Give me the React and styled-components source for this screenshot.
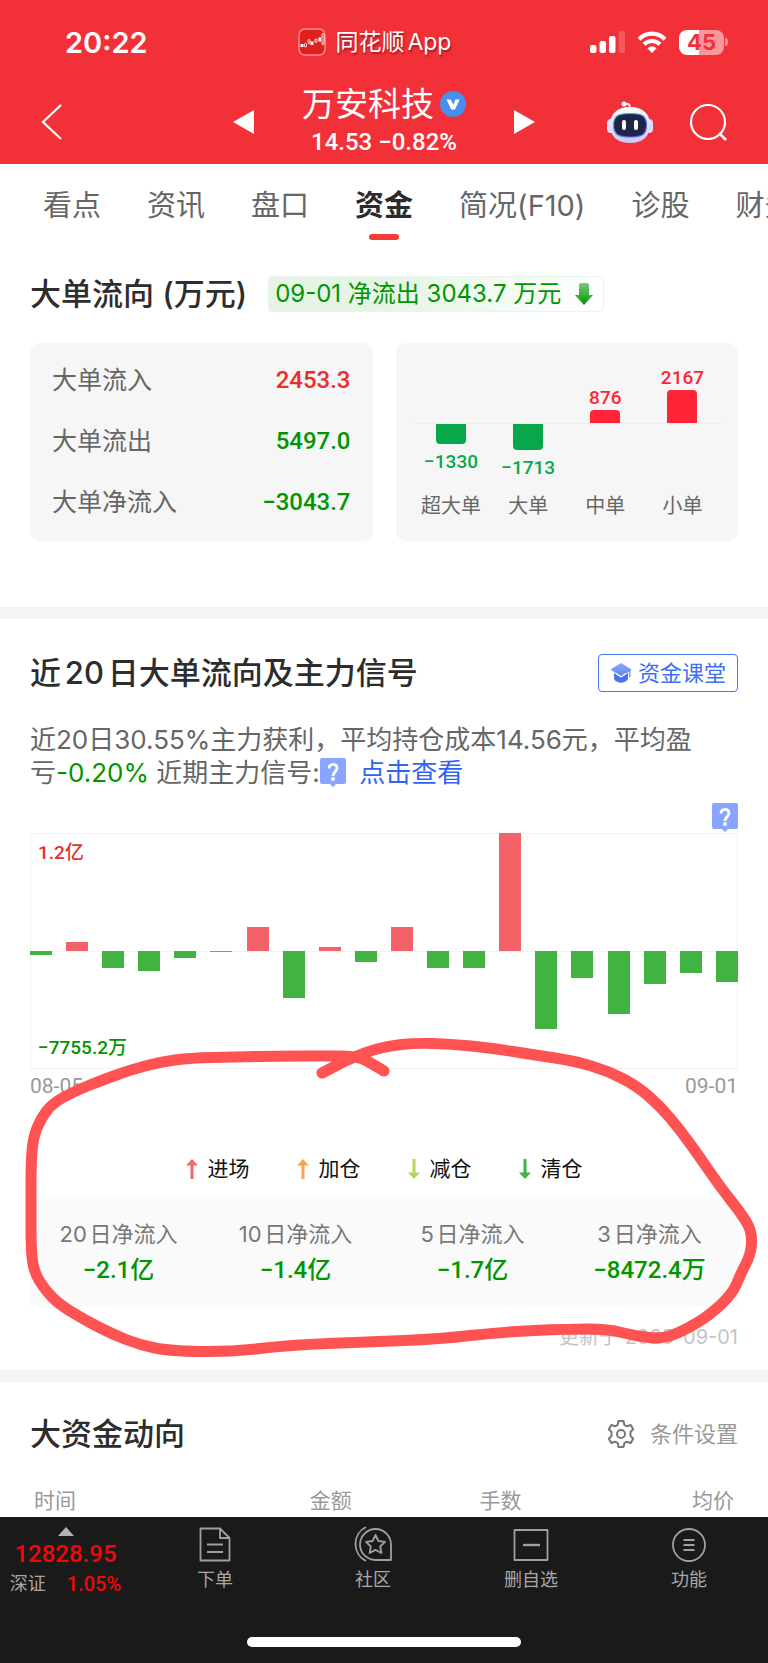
import React from 'react'
import styled, { createGlobalStyle } from 'styled-components'

const tabs = ['看点', '资讯', '盘口', '资金', '简况(F10)', '诊股', '财务']

const orderRows = [
  { label: '大单流入', value: '2453.3', up: true },
  { label: '大单流出', value: '5497.0' },
  { label: '大单净流入', value: '−3043.7' },
]

const orderBars = [
  { label: '超大单', value: -1330 },
  { label: '大单', value: -1713 },
  { label: '中单', value: 876 },
  { label: '小单', value: 2167 },
]

// net inflow of each day, as a percentage of half the chart height
const dailyFlow = [
  -3, 8, -14, -17, -6, 0.4, 20, -40, 3, -9, 20, -14, -14, 100, -66, -23, -53,
  -28, -19, -26,
]

const signals = [
  { label: '进场', color: '#f0696c', up: true },
  { label: '加仓', color: '#ffa24d', up: true },
  { label: '减仓', color: '#b5d655' },
  { label: '清仓', color: '#43b244' },
]

const netInflow = [
  { label: '20日净流入', value: '−2.1亿' },
  { label: '10日净流入', value: '−1.4亿' },
  { label: '5日净流入', value: '−1.7亿' },
  { label: '3日净流入', value: '−8472.4万' },
]

const markPoints = [
  [384, 41], [371, 33], [357, 26], [320, 26], [280, 26], [235, 27], [190, 28],
  [160, 32], [130, 40], [100, 51], [75, 61], [53, 73], [41, 88], [33, 108],
  [31, 135], [31, 175], [31, 220], [34, 242], [45, 260], [60, 275], [85, 290],
  [112, 304], [140, 315], [170, 321], [230, 322], [290, 315], [368, 312],
  [440, 309], [501, 302], [568, 299], [608, 299], [635, 306], [663, 309],
  [685, 300], [710, 285], [733, 263], [741, 243], [751, 224], [752, 203],
  [744, 187], [721, 158], [701, 129], [681, 101], [660, 76], [637, 56],
  [608, 41], [575, 31], [535, 25], [491, 18], [451, 14], [415, 13], [388, 16],
  [366, 22], [345, 31], [322, 43],
]

// Runs a quadratic curve through the middles of the given points
const smoothPath = points => {
  let d = `M${points[0].join(' ')}`
  for (let i = 1; i < points.length - 1; i++) {
    const [x, y] = points[i]
    const [nx, ny] = points[i + 1]
    d += ` Q${x} ${y} ${(x + nx) / 2} ${(y + ny) / 2}`
  }
  return `${d} L${points[points.length - 1].join(' ')}`
}

const AppLogo = () => (
  <svg width='28' height='28' viewBox='0 0 28 28' fill='none'>
    <rect x='1' y='1' width='26' height='26' rx='6' fill='#e0201f' stroke='#ff8f92' strokeWidth='1.4' />
    <path d='M2.500 16h3v3h-3zM12.500 13.500h3v3.500h-3zM20.500 9.500h2.500v4h-2.500z' fill='#fff' />
    <g stroke='#fff' strokeWidth='0.9'>
      <rect x='6.500' y='15.500' width='2' height='3.500' rx='1' />
      <rect x='10' y='11.500' width='2' height='4' rx='1' />
      <rect x='17' y='11' width='2' height='3.500' rx='1' />
      <rect x='24' y='5.500' width='2' height='11' rx='1' />
    </g>
  </svg>
)

const SignalIcon = () => (
  <svg width='35' height='22' viewBox='0 0 35 22' fill='#fff'>
    <rect x='0' y='14' width='6.500' height='8' rx='2' />
    <rect x='9.500' y='10' width='6.500' height='12' rx='2' />
    <rect x='19' y='5' width='6.500' height='17' rx='2' />
    <rect x='28.500' y='0' width='6.500' height='22' rx='2' opacity='0.2' />
  </svg>
)

const WifiIcon = () => (
  <svg width='30' height='22' viewBox='0 0 30 22' fill='none' stroke='#fff' strokeWidth='4.200'>
    <path d='M2 8.200C9.300 .8 20.700 .8 28 8.200' />
    <path d='M7 13.300c4.500-4.400 11.500-4.400 16 0' />
    <path d='M15 22l-4.600-4.700c2.600-2.300 6.600-2.300 9.200 0z' fill='#fff' stroke='none' />
  </svg>
)

const VerifiedIcon = () => (
  <svg width='26' height='26' viewBox='0 0 26 26'>
    <circle cx='13' cy='13' r='13' fill='#468fee' />
    <path d='M6.500 8.500h4.300l2.700 5.500 1.800-5.500h4.400L15 18.500h-3.800z' fill='#fff' />
  </svg>
)

const RobotIcon = () => (
  <svg width='46' height='42' viewBox='0 0 46 42'>
    <defs>
      <linearGradient id='shell' x1='0' y1='0' x2='0' y2='1'>
        <stop offset='0' stopColor='#ffffff' />
        <stop offset='1' stopColor='#c9c6f5' />
      </linearGradient>
      <linearGradient id='rim' x1='0' y1='0' x2='1' y2='1'>
        <stop offset='0' stopColor='#50c8d8' />
        <stop offset='1' stopColor='#6b46e8' />
      </linearGradient>
    </defs>
    <path d='M17 3c4-1 6 0 6 4' fill='none' stroke='#f1efff' strokeWidth='2' />
    <circle cx='17' cy='3' r='2.500' fill='#fff' />
    <rect x='0' y='18' width='8' height='14' rx='4' fill='#d9dcfa' />
    <rect x='38' y='18' width='8' height='14' rx='4' fill='#d9dcfa' />
    <path d='M23 6c13 0 20 7 20 18s-7 18-20 18S3 35 3 24 10 6 23 6z' fill='url(#shell)' />
    <path d='M23 12.500c11 0 16.500 1.500 16.500 11.500S34 36 23 36 6.500 34 6.500 24 12 12.500 23 12.500z' fill='#1d2646' stroke='url(#rim)' strokeWidth='1.200' />
    <rect x='15' y='19' width='4' height='10' rx='2' fill='#fff' />
    <rect x='27' y='19' width='4' height='10' rx='2' fill='#fff' />
  </svg>
)

const HelpIcon = () => (
  <svg width='26' height='29' viewBox='0 0 26 29'>
    <path d='M2 0h22a2 2 0 0 1 2 2v22a2 2 0 0 1-2 2h-8l-3 3-3-3H2a2 2 0 0 1-2-2V2a2 2 0 0 1 2-2z' fill='#8aa5ff' />
    <path d='M9 10.500C9 5 17 5 17 10c0 3.500-4 4-4 8' fill='none' stroke='#fff' strokeWidth='2.800' />
    <circle cx='13' cy='21' r='2' fill='#fff' />
  </svg>
)

const ClassIcon = () => (
  <svg width='22' height='20' viewBox='0 0 22 20'>
    <defs>
      <linearGradient id='cap' x1='0' y1='0' x2='0' y2='1'>
        <stop offset='0' stopColor='#8daaf8' />
        <stop offset='1' stopColor='#5c85f5' />
      </linearGradient>
    </defs>
    <path d='M4 10l7 4.200 7-4.200v6c-3 5-11 5-14 0z' fill='#4876f2' />
    <path d='M11 0l10.500 6.500-1 1.500v6h-1.300V8.700L11 13.500.5 6.500z' fill='url(#cap)' />
    <path d='M6 10.500l5 3.300 5-3.300' fill='none' stroke='#fff' strokeWidth='1.200' />
  </svg>
)

const GearIcon = () => (
  <svg width='28' height='28' viewBox='0 0 28 28' fill='none' stroke='#777' strokeWidth='2' strokeLinejoin='round'>
    <path d='M11.500 1h5l.8 3.800 2.600 1.500 3.800-1.300 2.500 4.300L23.500 12v4l2.700 2.700-2.500 4.300-3.800-1.300-2.600 1.500-.8 3.800h-5l-.8-3.800-2.600-1.500L4.300 23l-2.500-4.300L4.500 16v-4L1.800 9.300 4.300 5l3.800 1.300 2.600-1.500z' />
    <circle cx='14' cy='14' r='4' />
  </svg>
)

const SignalArrow = ({ color, up }) => (
  <svg width='12' height='20' viewBox='0 0 12 20'>
    {up ? (
      <path d='M6 0l6 6.500H7.500V20h-3V6.500H0z' fill={color} />
    ) : (
      <path d='M6 20l6-6.500H7.500V0h-3v13.500H0z' fill={color} />
    )}
  </svg>
)

const OrderIcon = () => (
  <svg width='34' height='36' viewBox='0 0 34 36'>
    <path d='M2.500 2.500H22L31.500 12v22.500h-29zM22 2.500V12h9.500M9 18.500h16M9 26h16' />
  </svg>
)

const CommunityIcon = () => (
  <svg width='38' height='36' viewBox='0 0 38 36'>
    <path d='M37 34V18.500a15.500 15.500 0 1 0-15.500 15.500zM12 1a19 19 0 0 0 0 34' />
    <path d='M21.500 9l2.900 6 6.600.9-4.800 4.600 1.200 6.500-5.900-3.100-5.900 3.100 1.200-6.500-4.800-4.600 6.600-.9z' />
  </svg>
)

const RemoveIcon = () => (
  <svg width='36' height='36' viewBox='0 0 36 36'>
    <path d='M1.500 4h33v30h-33z' />
    <path d='M10 19h17' strokeWidth='2.400' />
  </svg>
)

const MenuIcon = () => (
  <svg width='36' height='36' viewBox='0 0 36 36'>
    <circle cx='18' cy='19' r='16' />
    <path d='M12.500 14h11M12.500 19h11M12.500 24h11' strokeWidth='2.200' />
  </svg>
)

const actions = [
  { label: '下单', Icon: OrderIcon },
  { label: '社区', Icon: CommunityIcon },
  { label: '删自选', Icon: RemoveIcon },
  { label: '功能', Icon: MenuIcon },
]

const App = () => {
  return (
    <Page>
      <GlobalStyle />
      <Header>
        <StatusBar>
          <Clock>20:22</Clock>
          <Source>
            <AppLogo />
            同花顺App
          </Source>
          <Indicators>
            <SignalIcon />
            <WifiIcon />
            <Battery>45</Battery>
          </Indicators>
        </StatusBar>
        <StockBar>
          <IconButton aria-label='返回'>
            <svg width='22' height='38' viewBox='0 0 22 38' fill='none' stroke='#fff' strokeWidth='2.200'>
              <path d='M20 2L2 19l18 17' />
            </svg>
          </IconButton>
          <Switcher>
            <IconButton aria-label='上一只'>
              <svg width='21' height='24' viewBox='0 0 21 24' fill='#fff'>
                <path d='M21 0v24L0 12z' />
              </svg>
            </IconButton>
            <Stock>
              <StockName>
                万安科技
                <VerifiedIcon />
              </StockName>
              <StockPrice>14.53 −0.82%</StockPrice>
            </Stock>
            <IconButton aria-label='下一只'>
              <svg width='21' height='24' viewBox='0 0 21 24' fill='#fff'>
                <path d='M0 0v24l21-12z' />
              </svg>
            </IconButton>
          </Switcher>
          <Tools>
            <IconButton aria-label='智能助手'>
              <RobotIcon />
            </IconButton>
            <IconButton aria-label='搜索'>
              <svg width='38' height='38' viewBox='0 0 38 38' fill='none' stroke='#fff' strokeWidth='2.200'>
                <circle cx='19' cy='19' r='17' />
                <path d='M30 30l7 7' strokeWidth='2.600' />
              </svg>
            </IconButton>
          </Tools>
        </StockBar>
      </Header>

      <Tabs>
        {tabs.map(tab => (
          <Tab key={tab} href='#' $active={tab === '资金'}>
            {tab}
          </Tab>
        ))}
      </Tabs>

      <OrderSection>
        <TitleRow>
          <Title>大单流向 (万元)</Title>
          <FlowTag>
            09-01 净流出 3043.7 万元
            <svg width='18' height='22' viewBox='0 0 18 22'>
              <defs>
                <linearGradient id='down' x1='0' y1='0' x2='0' y2='1'>
                  <stop offset='0' stopColor='#7cc97c' />
                  <stop offset='1' stopColor='#009600' />
                </linearGradient>
              </defs>
              <path d='M4 1.500Q4 0 5.500 0h7Q14 0 14 1.500V12h4l-9 10-9-10h4z' fill='url(#down)' />
            </svg>
          </FlowTag>
        </TitleRow>
        <Cards>
          <OrderCard>
            {orderRows.map(row => (
              <OrderRow key={row.label}>
                <dt>{row.label}</dt>
                <OrderValue $up={row.up}>{row.value}</OrderValue>
              </OrderRow>
            ))}
          </OrderCard>
          <BarCard>
            {orderBars.map(bar => (
              <BarColumn key={bar.label}>
                <BarHalf $up>
                  {bar.value > 0 && (
                    <>
                      <BarValue $up>{bar.value}</BarValue>
                      <OrderBar $up style={{ height: Math.round(bar.value / 66) }} />
                    </>
                  )}
                </BarHalf>
                <BarHalf>
                  {bar.value < 0 && (
                    <>
                      <OrderBar style={{ height: Math.round(-bar.value / 66) }} />
                      <BarValue>−{-bar.value}</BarValue>
                    </>
                  )}
                </BarHalf>
                <BarLabel>{bar.label}</BarLabel>
              </BarColumn>
            ))}
          </BarCard>
        </Cards>
      </OrderSection>

      <SignalSection>
        <TitleRow $spread>
          <Title>近20日大单流向及主力信号</Title>
          <ClassButton>
            <ClassIcon />
            资金课堂
          </ClassButton>
        </TitleRow>
        <Summary>
          近20日30.55%主力获利，平均持仓成本14.56元，平均盈亏<Loss>-0.20%</Loss> 近期主力信号:
          <HelpIcon /> <a href='#'>点击查看</a>
        </Summary>
        <HelpRow>
          <IconButton aria-label='说明'>
            <HelpIcon />
          </IconButton>
        </HelpRow>
        <Chart>
          <ChartLimit $up>1.2亿</ChartLimit>
          <ChartLimit>−7755.2万</ChartLimit>
          {dailyFlow.map((value, i) => (
            <DayColumn key={i}>
              <DayHalf $up>{value > 0 && <DayBar $up style={{ height: `${value}%` }} />}</DayHalf>
              <DayHalf>{value < 0 && <DayBar style={{ height: `${-value}%` }} />}</DayHalf>
            </DayColumn>
          ))}
        </Chart>
        <Dates>
          <span>08-05</span>
          <span>09-01</span>
        </Dates>
        <Legend>
          {signals.map(signal => (
            <LegendItem key={signal.label}>
              <SignalArrow color={signal.color} up={signal.up} />
              {signal.label}
            </LegendItem>
          ))}
        </Legend>
        <Inflow>
          {netInflow.map(item => (
            <div key={item.label}>
              <InflowLabel>{item.label}</InflowLabel>
              <InflowValue>{item.value}</InflowValue>
            </div>
          ))}
        </Inflow>
        <Updated>更新于 2025-09-01</Updated>
        <Mark viewBox='0 0 768 340' preserveAspectRatio='none'>
          <path d={smoothPath(markPoints)} />
        </Mark>
      </SignalSection>

      <MoneySection>
        <TitleRow $spread>
          <Title>大资金动向</Title>
          <SettingsButton>
            <GearIcon />
            条件设置
          </SettingsButton>
        </TitleRow>
        <MoneyTable>
          <thead>
            <tr>
              <th>时间</th>
              <th>金额</th>
              <th>手数</th>
              <th>均价</th>
            </tr>
          </thead>
        </MoneyTable>
      </MoneySection>

      <BottomBar>
        <Actions>
          <IndexButton>
            <svg width='16' height='9' viewBox='0 0 16 9' fill='#b3b3b3'>
              <path d='M8 0l8 9H0z' />
            </svg>
            <IndexValue>12828.95</IndexValue>
            <IndexChange>
              深证 <b>1.05%</b>
            </IndexChange>
          </IndexButton>
          {actions.map(({ label, Icon }) => (
            <Action key={label}>
              <Icon />
              {label}
            </Action>
          ))}
        </Actions>
        <HomeIndicator />
      </BottomBar>
    </Page>
  )
}

// Defining the styled-components
const numberFont = `Roboto, 'Noto Sans CJK SC', sans-serif`

const GlobalStyle = createGlobalStyle`
  * {
    box-sizing: border-box;
  }

  body {
    margin: 0;
    background: #fff;
    font-family: Inter, 'Noto Sans CJK SC', sans-serif;
    text-autospace: normal; /* Small gap between digits and Chinese characters */
  }

  button {
    font-family: inherit;
  }

  svg {
    display: block;
    flex-shrink: 0;
  }

  dl, dt, dd, h2, p {
    margin: 0;
  }
`

const Page = styled.div`
  overflow: hidden;
`

const Header = styled.header`
  color: #fff;
  background: #f23038;
`

const StatusBar = styled.div`
  display: flex;
  justify-content: space-between;
  align-items: center;
  height: 84px;
  padding: 0 40px 0 65px;
`

const Clock = styled.span`
  min-width: 94px;
  font-size: 29px;
  font-weight: 600;
`

const Source = styled.span`
  display: flex;
  align-items: center;
  gap: 10px;
  font-size: 23px;
  line-height: 28px;
  text-shadow: 1px 2px 2px rgba(90, 0, 0, 0.5);
`

const Indicators = styled.div`
  display: flex;
  align-items: center;
  gap: 12px;
`

const Battery = styled.span`
  position: relative;
  width: 45px;
  height: 25px;
  margin-right: 4px;
  border-radius: 8px;
  background: linear-gradient(90deg, #fff 44%, #fa979b 44%);
  color: #f23038;
  font-size: 22px;
  font-weight: 700;
  line-height: 25px;
  text-align: center;

  &::after {
    content: '';
    position: absolute; /* The small pole on the right of the battery */
    top: 8px;
    right: -4px;
    width: 3px;
    height: 8px;
    border-radius: 0 3px 3px 0;
    background: #fa979b;
  }
`

const StockBar = styled.div`
  display: grid;
  grid-template-columns: 1fr auto 1fr;
  align-items: center;
  height: 80px;
  padding: 0 41px 4px;
`

const IconButton = styled.button`
  justify-self: start;
  padding: 0;
  border: 0;
  background: none;
`

const Switcher = styled.div`
  display: flex;
  align-items: center;
  gap: 48px;
`

const Stock = styled.div`
  text-align: center;
`

const StockName = styled.div`
  display: flex;
  align-items: center;
  gap: 6px;
  font-size: 33px;
  line-height: 40px;
`

const StockPrice = styled.div`
  font-family: ${numberFont};
  font-size: 24px;
  font-weight: 500;
  line-height: 36px;
`

const Tools = styled.div`
  display: flex;
  justify-content: flex-end;
  align-items: center;
  gap: 36px;
`

const Tabs = styled.nav`
  display: flex;
  gap: 46px;
  height: 82px;
  padding-left: 43px;
  overflow: hidden;
  white-space: nowrap;
`

const Tab = styled.a`
  position: relative;
  color: ${props => (props.$active ? '#2b2b2b' : '#666')};
  font-size: 29px;
  font-weight: ${props => (props.$active ? 600 : 400)};
  line-height: 84px;
  text-decoration: none;

  &::after {
    content: '';
    display: ${props => (props.$active ? 'block' : 'none')};
    position: absolute; /* Underline of the open tab */
    bottom: 6px;
    left: 50%;
    width: 30px;
    height: 6px;
    margin-left: -15px;
    border-radius: 3px;
    background: #f63c36;
  }
`

const Section = styled.section`
  padding: 0 30px;
`

const OrderSection = styled(Section)`
  padding-top: 30px;
  padding-bottom: 66px;
`

const TitleRow = styled.div`
  display: flex;
  align-items: center;
  justify-content: ${props => (props.$spread ? 'space-between' : 'flex-start')};
  gap: 21px;
  height: 36px;
`

const Title = styled.h2`
  color: #2d2d2d;
  font-size: 31px;
  font-weight: 500;
  line-height: 36px;
`

const FlowTag = styled.span`
  display: flex;
  align-items: center;
  gap: 14px;
  height: 36px;
  padding: 0 10px 0 6px;
  border: 1px solid #e9f5e9;
  border-radius: 4px;
  background: linear-gradient(90deg, #e6f4e6 35%, #fff);
  color: #009600;
  font-size: 24px;
  line-height: 34px;
`

const Cards = styled.div`
  display: grid;
  grid-template-columns: 1fr 1fr;
  gap: 23px;
  margin-top: 31px;
`

const OrderCard = styled.dl`
  padding: 7px 22px 8px;
  border-radius: 10px;
  background: #f6f6f6;
`

const OrderRow = styled.div`
  display: flex;
  justify-content: space-between;
  color: #666;
  font-size: 25px;
  line-height: 61px;
`

const OrderValue = styled.dd`
  color: ${props => (props.$up ? '#ee2c2c' : '#009600')};
  font-family: ${numberFont};
  font-size: 24px;
  font-weight: 500;
`

const BarCard = styled.div`
  display: grid;
  grid-template-columns: repeat(4, 1fr);
  padding: 15px 17px 0;
  border-radius: 10px;
  background: #f6f6f6;
`

const BarColumn = styled.div`
  text-align: center;
`

const BarHalf = styled.div`
  display: flex;
  flex-direction: column;
  justify-content: ${props => (props.$up ? 'flex-end' : 'flex-start')};
  align-items: center;
  gap: ${props => (props.$up ? '2px' : '8px')};
  height: 66px;
  border-bottom: ${props => (props.$up ? '1px solid #efefef' : '0')};
`

const OrderBar = styled.div`
  width: 30px;
  border-radius: ${props => (props.$up ? '4px 4px 0 0' : '0 0 4px 4px')};
  background: ${props => (props.$up ? '#ff2436' : '#08a84a')};
`

const BarValue = styled.span`
  color: ${props => (props.$up ? '#ff2436' : '#08a84a')};
  font-family: ${numberFont};
  font-size: 19px;
  font-weight: 500;
  line-height: 20px;
`

const BarLabel = styled.div`
  color: #666;
  font-size: 20px;
  line-height: 32px;
`

const SignalSection = styled(Section)`
  position: relative;
  padding-top: 36px;
  padding-bottom: 21px;
  border-top: 12px solid #f4f4f4;
`

const ClassButton = styled.button`
  display: flex;
  align-items: center;
  gap: 6px;
  height: 38px;
  padding: 0 11px;
  border: 1px solid #4a75f3;
  border-radius: 4px;
  background: #fff;
  color: #3f6ff2;
  font-size: 22px;
  line-height: 34px;
`

const Summary = styled.p`
  margin-top: 32px;
  padding-right: 20px;
  color: #666;
  font-size: 26px;
  line-height: 33px;
  text-autospace: no-autospace;

  svg {
    display: inline-block;
    margin-right: 6px;
    vertical-align: -5px;
  }

  a {
    color: #2f63f5;
    text-decoration: none;
  }
`

const Loss = styled.span`
  color: #009600;
`

const HelpRow = styled.div`
  display: flex;
  justify-content: flex-end;
  margin-top: 14px;
`

const Chart = styled.div`
  position: relative;
  display: flex;
  justify-content: space-between;
  height: 236px;
  margin-top: 1px;
  background: linear-gradient(#f3f3f3, #f3f3f3) center / 100% 1px no-repeat;
  box-shadow: inset 0 0 0 1px #f3f3f3;
`

const ChartLimit = styled.span`
  position: absolute; /* Written over the bars in the corner of the chart */
  left: 8px;
  top: ${props => (props.$up ? '8px' : 'auto')};
  bottom: ${props => (props.$up ? 'auto' : '9px')};
  color: ${props => (props.$up ? '#e33333' : '#009600')};
  font-family: ${numberFont};
  font-size: 19px;
  font-weight: 500;
  line-height: 24px;
  text-autospace: no-autospace;
`

const DayColumn = styled.div`
  width: 22px;
`

const DayHalf = styled.div`
  display: flex;
  align-items: ${props => (props.$up ? 'flex-end' : 'flex-start')};
  height: 50%;
`

const DayBar = styled.div`
  width: 100%;
  background: ${props => (props.$up ? '#f26268' : '#40b340')};
`

const Dates = styled.div`
  display: flex;
  justify-content: space-between;
  margin-top: 5px;
  color: #999;
  font-family: ${numberFont};
  font-size: 21px;
  line-height: 24px;
`

const Legend = styled.div`
  display: flex;
  justify-content: center;
  gap: 47px;
  margin-top: 59px;
`

const LegendItem = styled.span`
  display: flex;
  align-items: center;
  gap: 10px;
  color: #111;
  font-size: 21px;
  line-height: 24px;
`

const Inflow = styled.dl`
  display: grid;
  grid-template-columns: repeat(4, 1fr);
  margin-top: 18px;
  padding: 18px 0;
  background: #fafafa;
  text-align: center;
`

const InflowLabel = styled.dt`
  color: #777;
  font-size: 22px;
  line-height: 34px;
`

const InflowValue = styled.dd`
  color: #009600;
  font-family: ${numberFont};
  font-size: 24px;
  font-weight: 500;
  line-height: 38px;
  text-autospace: no-autospace;
`

const Updated = styled.p`
  margin-top: 18px;
  color: #c4c4c4;
  font-size: 20px;
  line-height: 24px;
  text-align: right;
`

const Mark = styled.svg`
  position: absolute; /* Hand drawn ring over the legend and the net inflow */
  left: 0;
  bottom: 0;
  width: 100%;
  height: 340px;
  fill: none;
  stroke: #ff5252;
  stroke-width: 11px;
  stroke-linecap: round;
  stroke-linejoin: round;
  pointer-events: none;
`

const MoneySection = styled(Section)`
  padding-top: 34px;
  border-top: 12px solid #f4f4f4;
`

const SettingsButton = styled.button`
  display: flex;
  align-items: center;
  gap: 15px;
  padding: 0;
  border: 0;
  background: none;
  color: #999;
  font-size: 22px;
  line-height: 24px;
`

const MoneyTable = styled.table`
  width: 100%;
  margin-top: 33px;
  border-collapse: collapse;
  table-layout: fixed;

  th {
    width: 24%;
    padding: 0 4px;
    color: #999;
    font-size: 21px;
    font-weight: 400;
    line-height: 32px;
    text-align: right;
  }

  th:first-child {
    width: 22%;
    text-align: left;
  }

  th:last-child {
    width: 30%;
  }
`

const BottomBar = styled.footer`
  padding-bottom: 16px;
  background: #1a1a1a;
`

const Actions = styled.nav`
  display: grid;
  grid-template-columns: 136px repeat(4, 1fr);
  height: 120px;
`

const Action = styled.button`
  display: flex;
  flex-direction: column;
  align-items: center;
  gap: 6px;
  padding: 9px 0 0;
  border: 0;
  background: none;
  color: #a8a8a8;
  font-size: 18px;
  line-height: 24px;

  svg {
    fill: none;
    stroke: #a0a0a0;
    stroke-width: 1.8;
    stroke-linejoin: round;
  }
`

const IndexButton = styled.button`
  display: flex;
  flex-direction: column;
  align-items: center;
  padding: 10px 5px 0 0;
  border: 0;
  background: none;
  color: #a8a8a8;
`

const IndexValue = styled.span`
  margin-top: 4px;
  color: #f40606;
  font-family: ${numberFont};
  font-size: 24px;
  font-weight: 500;
  line-height: 28px;
`

const IndexChange = styled.span`
  display: flex;
  align-items: center;
  gap: 21px;
  font-size: 18px;
  line-height: 32px;

  b {
    color: #f40606;
    font-family: ${numberFont};
    font-size: 20px;
    font-weight: 500;
  }
`

const HomeIndicator = styled.div`
  width: 274px;
  height: 10px;
  margin: 0 auto;
  border-radius: 5px;
  background: #fff;
`

export default App
